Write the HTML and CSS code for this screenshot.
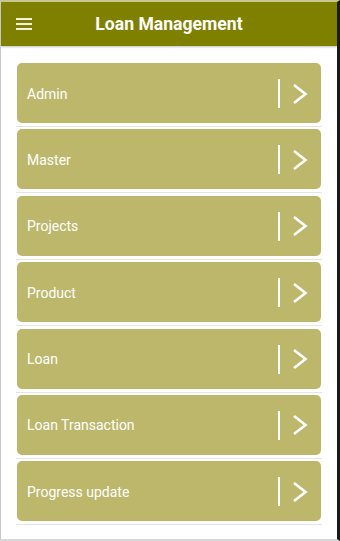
FILE: index.html
```html
<!DOCTYPE html>
<html lang="en">
<head>
    <meta charset="UTF-8">
    <title>Loan Management</title>
    <link rel="stylesheet" href="styles.css">
</head>
<body>
    <div class="app">
        <div class="header">
            <button class="menu-btn" aria-label="Menu">
                <span></span><span></span><span></span>
            </button>
            <h1>Loan Management</h1>
        </div>

        <div class="menu-list">
            <div class="menu-item">
                <div class="menu-card">
                    <span class="menu-label">Admin</span>
                    <span class="menu-arrow">
                        <span class="divider"></span>
                        <svg width="16" height="22" viewBox="0 0 16 22"><polyline points="2,2 13.5,11 2,20" fill="none" stroke="#fff" stroke-width="2.6"/></svg>
                    </span>
                </div>
            </div>
            <div class="menu-item">
                <div class="menu-card">
                    <span class="menu-label">Master</span>
                    <span class="menu-arrow">
                        <span class="divider"></span>
                        <svg width="16" height="22" viewBox="0 0 16 22"><polyline points="2,2 13.5,11 2,20" fill="none" stroke="#fff" stroke-width="2.6"/></svg>
                    </span>
                </div>
            </div>
            <div class="menu-item">
                <div class="menu-card">
                    <span class="menu-label">Projects</span>
                    <span class="menu-arrow">
                        <span class="divider"></span>
                        <svg width="16" height="22" viewBox="0 0 16 22"><polyline points="2,2 13.5,11 2,20" fill="none" stroke="#fff" stroke-width="2.6"/></svg>
                    </span>
                </div>
            </div>
            <div class="menu-item">
                <div class="menu-card">
                    <span class="menu-label">Product</span>
                    <span class="menu-arrow">
                        <span class="divider"></span>
                        <svg width="16" height="22" viewBox="0 0 16 22"><polyline points="2,2 13.5,11 2,20" fill="none" stroke="#fff" stroke-width="2.6"/></svg>
                    </span>
                </div>
            </div>
            <div class="menu-item">
                <div class="menu-card">
                    <span class="menu-label">Loan</span>
                    <span class="menu-arrow">
                        <span class="divider"></span>
                        <svg width="16" height="22" viewBox="0 0 16 22"><polyline points="2,2 13.5,11 2,20" fill="none" stroke="#fff" stroke-width="2.6"/></svg>
                    </span>
                </div>
            </div>
            <div class="menu-item">
                <div class="menu-card">
                    <span class="menu-label">Loan Transaction</span>
                    <span class="menu-arrow">
                        <span class="divider"></span>
                        <svg width="16" height="22" viewBox="0 0 16 22"><polyline points="2,2 13.5,11 2,20" fill="none" stroke="#fff" stroke-width="2.6"/></svg>
                    </span>
                </div>
            </div>
            <div class="menu-item">
                <div class="menu-card">
                    <span class="menu-label">Progress update</span>
                    <span class="menu-arrow">
                        <span class="divider"></span>
                        <svg width="16" height="22" viewBox="0 0 16 22"><polyline points="2,2 13.5,11 2,20" fill="none" stroke="#fff" stroke-width="2.6"/></svg>
                    </span>
                </div>
            </div>
        </div>
    </div>
</body>
</html>
```

FILE: styles.css
```css
* {
    box-sizing: border-box;
    font-family: Roboto, 'Noto Sans', sans-serif;
}

body {
    margin: 0;
    background-color: #ffffff;
}

.app {
    width: 340px;
    height: 541px;
    border-top: 2px solid #c9c58f;
    border-left: 1px solid #c8c8c8;
    border-right: 3px solid #1a1a1a;
    border-bottom: 2px solid #d8d8d8;
    overflow: hidden;
}

.header {
    position: relative;
    height: 44px;
    background-color: #808000;
    display: flex;
    align-items: center;
    justify-content: center;
    box-shadow: 0 1px 2px rgba(0,0,0,0.25);
}

.header h1 {
    margin: 0;
    color: #ffffff;
    font-size: 17.6px;
    font-weight: 700;
}

.menu-btn {
    position: absolute;
    left: 14px;
    top: 15px;
    width: 18px;
    height: 14px;
    padding: 1px 1px;
    border: none;
    background: none;
    display: flex;
    flex-direction: column;
    justify-content: space-between;
    cursor: pointer;
}

.menu-btn span {
    display: block;
    height: 2px;
    background-color: #f2f2e0;
}

.menu-list {
    padding: 17px 15px 0 15px;
}

.menu-item {
    padding-bottom: 3px;
    border-bottom: 1px solid #e4e4e4;
    margin-bottom: 2.4px;
    padding-left: 1px;
    padding-right: 1px;
}

.menu-card {
    height: 60px;
    background-color: #bdb76b;
    border-radius: 5px;
    display: flex;
    align-items: center;
    justify-content: space-between;
    padding: 1px 13px 0 10px;
    color: #ffffff;
    font-size: 14px;
}

.menu-arrow {
    display: flex;
    align-items: center;
    gap: 12px;
}

.divider {
    width: 2px;
    height: 29px;
    background-color: #ffffff;
}

.menu-arrow svg {
    display: block;
}
```
